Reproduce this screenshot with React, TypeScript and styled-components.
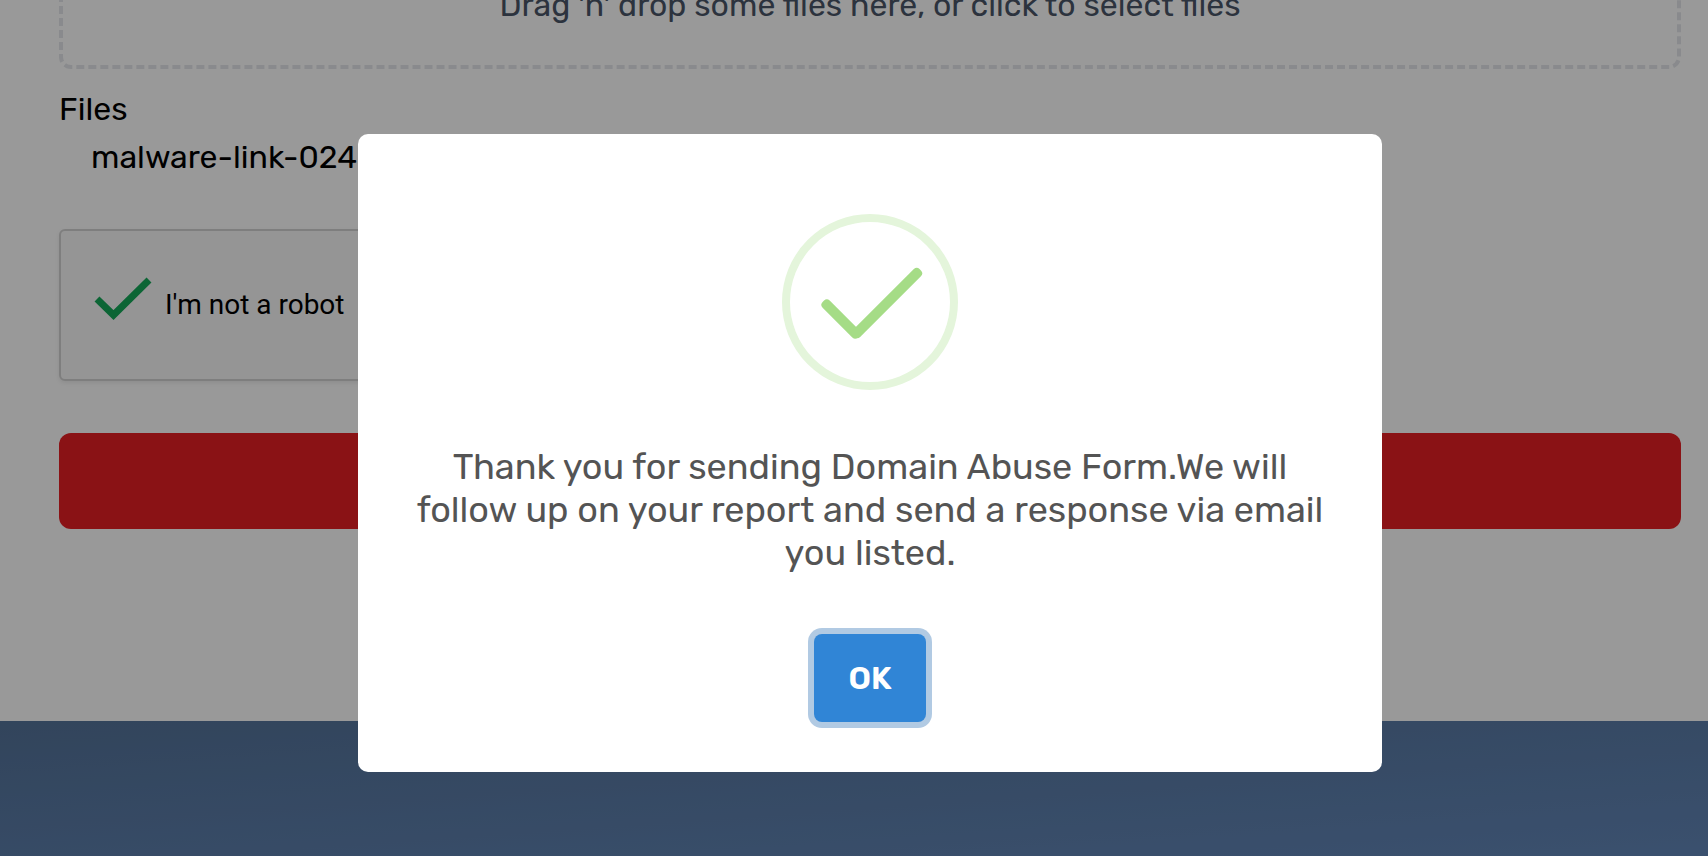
import React from "react";
import styled, { createGlobalStyle } from "styled-components";

const GlobalStyle = createGlobalStyle`
  *, *::before, *::after { box-sizing: border-box; }
  html, body { margin: 0; overflow: hidden; }
  body {
    background: #fff;
    color: #000;
    font-family: Rubik, Roboto, sans-serif;
    font-size: 32px;
    line-height: 48px;
  }
`;

const Page = styled.div`
  display: flex;
  flex-direction: column;
  height: 100vh;
`;

/* The form is scrolled so that only the foot of the drop zone is in view. */
const Form = styled.form`
  display: flex;
  flex-direction: column;
  margin-top: -91px;
  padding: 0 27px 192px 59px;
`;

const DropZone = styled.button`
  display: block;
  width: 100%;
  padding: 68px 16px 36px;
  border: 4px dashed #e5e7eb;
  border-radius: 12px;
  background: transparent;
  color: #4a5568;
  font: inherit;
  text-align: center;
`;

const FilesHeading = styled.h4`
  margin: 16px 0 0;
  font-size: inherit;
  font-weight: 400;
`;

const FileList = styled.ul`
  margin: 0 0 48px;
  padding: 0 32px;
  list-style: none;
`;

const Captcha = styled.label`
  display: flex;
  align-items: center;
  gap: 12px;
  width: 608px;
  height: 152px;
  margin-bottom: 52px;
  padding: 0 32px;
  border: 2px solid #d3d3d3;
  border-radius: 6px;
  background: #f9f9f9;
  box-shadow: 0 2px 4px rgba(0, 0, 0, 0.08);
  font: 28px/34px Roboto, sans-serif;
`;

const CheckCell = styled.span`
  display: grid;
  width: 60px;
  height: 60px;
  > * { grid-area: 1 / 1; }
`;

const CaptchaInput = styled.input`
  width: 60px;
  height: 60px;
  margin: 0;
  appearance: none;
`;

const Submit = styled.button`
  height: 96px;
  border: 0;
  border-radius: 12px;
  background: #e61f24;
`;

const Footer = styled.footer`
  flex: 1;
  background: linear-gradient(176deg, #547399 0%, #6286b8 100%);
`;

const Overlay = styled.div`
  position: fixed;
  inset: 0;
  display: flex;
  align-items: center;
  justify-content: center;
  padding: 50px 0 0 32px;
  background: rgba(0, 0, 0, 0.4);
`;

const Dialog = styled.div`
  display: flex;
  flex-direction: column;
  align-items: center;
  width: 1024px;
  max-width: 100%;
  padding: 80px 48px 50px;
  border-radius: 10px;
  background: #fff;
`;

const Message = styled.h2`
  margin: 55px 0 60px;
  color: #545454;
  font-size: 36px;
  font-weight: 400;
  line-height: 43px;
  text-align: center;
`;

const Confirm = styled.button`
  width: 112px;
  height: 88px;
  padding: 0;
  border: 0;
  border-radius: 8px;
  outline: 0;
  background: #3085d6;
  box-shadow: 0 0 0 6px rgba(100, 150, 200, 0.5);
  color: #fff;
  font: 600 32px/40px Rubik, Roboto, sans-serif;
`;

function SuccessIcon() {
  return (
    <svg width="176" height="176" viewBox="0 0 176 176" aria-hidden="true">
      <circle cx="88" cy="88" r="84" fill="none" stroke="#e4f5db" strokeWidth="8" />
      <g fill="#a5dc86">
        <rect x="34" y="100" width="50" height="10" rx="4" transform="rotate(45 59 105)" />
        <rect x="58" y="84" width="94" height="10" rx="4" transform="rotate(-45 105 89)" />
      </g>
    </svg>
  );
}

export default function App() {
  return (
    <>
      <GlobalStyle />
      <Page>
        <Form>
          <DropZone type="button">Drag 'n' drop some files here, or click to select files</DropZone>
          <FilesHeading>Files</FilesHeading>
          <FileList>
            <li>malware-link-024</li>
          </FileList>
          <Captcha>
            <CheckCell>
              <CaptchaInput type="checkbox" defaultChecked />
              <svg width="60" height="60" viewBox="0 0 60 60" aria-hidden="true">
                <path d="M4 24 20.5 40 56 5" fill="none" stroke="#15a859" strokeWidth="7" />
              </svg>
            </CheckCell>
            I'm not a robot
          </Captcha>
          <Submit type="button" aria-label="Submit" />
        </Form>
        <Footer />
      </Page>
      <Overlay>
        <Dialog role="dialog" aria-modal="true" aria-labelledby="message">
          <SuccessIcon />
          <Message id="message">
            Thank you for sending Domain Abuse Form.We will follow up on your report and send a response via email you
            listed.
          </Message>
          <Confirm type="button">OK</Confirm>
        </Dialog>
      </Overlay>
    </>
  );
}
